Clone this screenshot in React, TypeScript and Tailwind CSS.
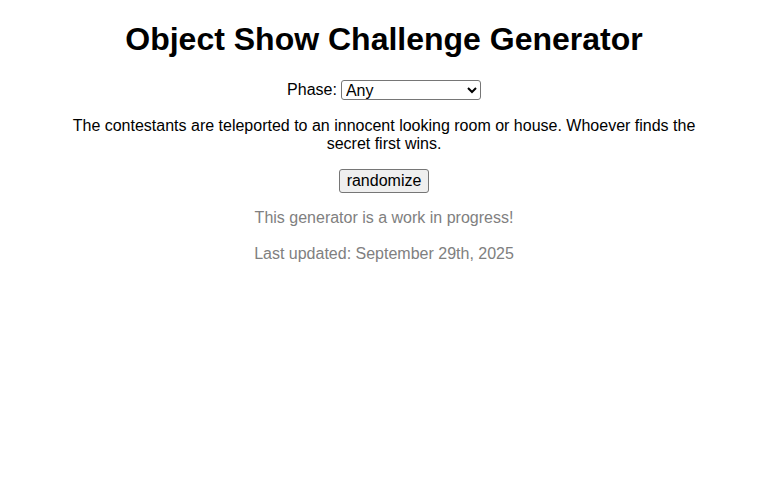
import * as React from "react";

const phases = ["Any", "Early", "Middle", "Late", "Finale"];

const challenges = [
  "The contestants are teleported to an innocent looking room or house. Whoever finds the secret first wins.",
  "The contestants must build a raft out of whatever they can find and sail it across the lake.",
  "Each team has to bake a cake that looks exactly like the host. Closest likeness wins.",
];

const App: React.FC = () => {
  const [phase, setPhase] = React.useState("Any");
  const [index, setIndex] = React.useState(0);

  const randomize = () => {
    setIndex(Math.floor(Math.random() * challenges.length));
  };

  return (
    <div className="min-h-screen bg-white px-2 text-center text-base text-black font-['Liberation_Sans',Arial,sans-serif] leading-[1.15]">
      <h1 className="pt-[21px] pb-[22px] text-[32px] font-bold leading-[37px]">Object Show Challenge Generator</h1>
      <div className="flex items-start justify-center gap-1 h-[22px]">
        <label htmlFor="phase" className="mt-[1px]">Phase:</label>
        <select
          id="phase"
          value={phase}
          onChange={(e) => setPhase(e.target.value)}
          className="h-5 w-[140px] rounded-[3px] border border-[#767676] bg-white pl-0 text-[16px] leading-[18px]"
        >
          {phases.map((p) => (
            <option key={p}>{p}</option>
          ))}
        </select>
      </div>
      <p className="mx-auto mt-[15px] max-w-[640px] leading-[18px]">{challenges[index]}</p>
      <div className="mt-[16px]">
        <button
          onClick={randomize}
          className="h-6 rounded-[3px] border border-[#767676] bg-[#efefef] px-[7px] leading-[20px] hover:bg-[#e5e5e5]"
        >
          randomize
        </button>
      </div>
      <p className="mt-[16px] leading-[18px] text-[#808080]">This generator is a work in progress!</p>
      <p className="mt-[18px] leading-[18px] text-[#808080]">Last updated: September 29th, 2025</p>
    </div>
  );
};

export default App;
